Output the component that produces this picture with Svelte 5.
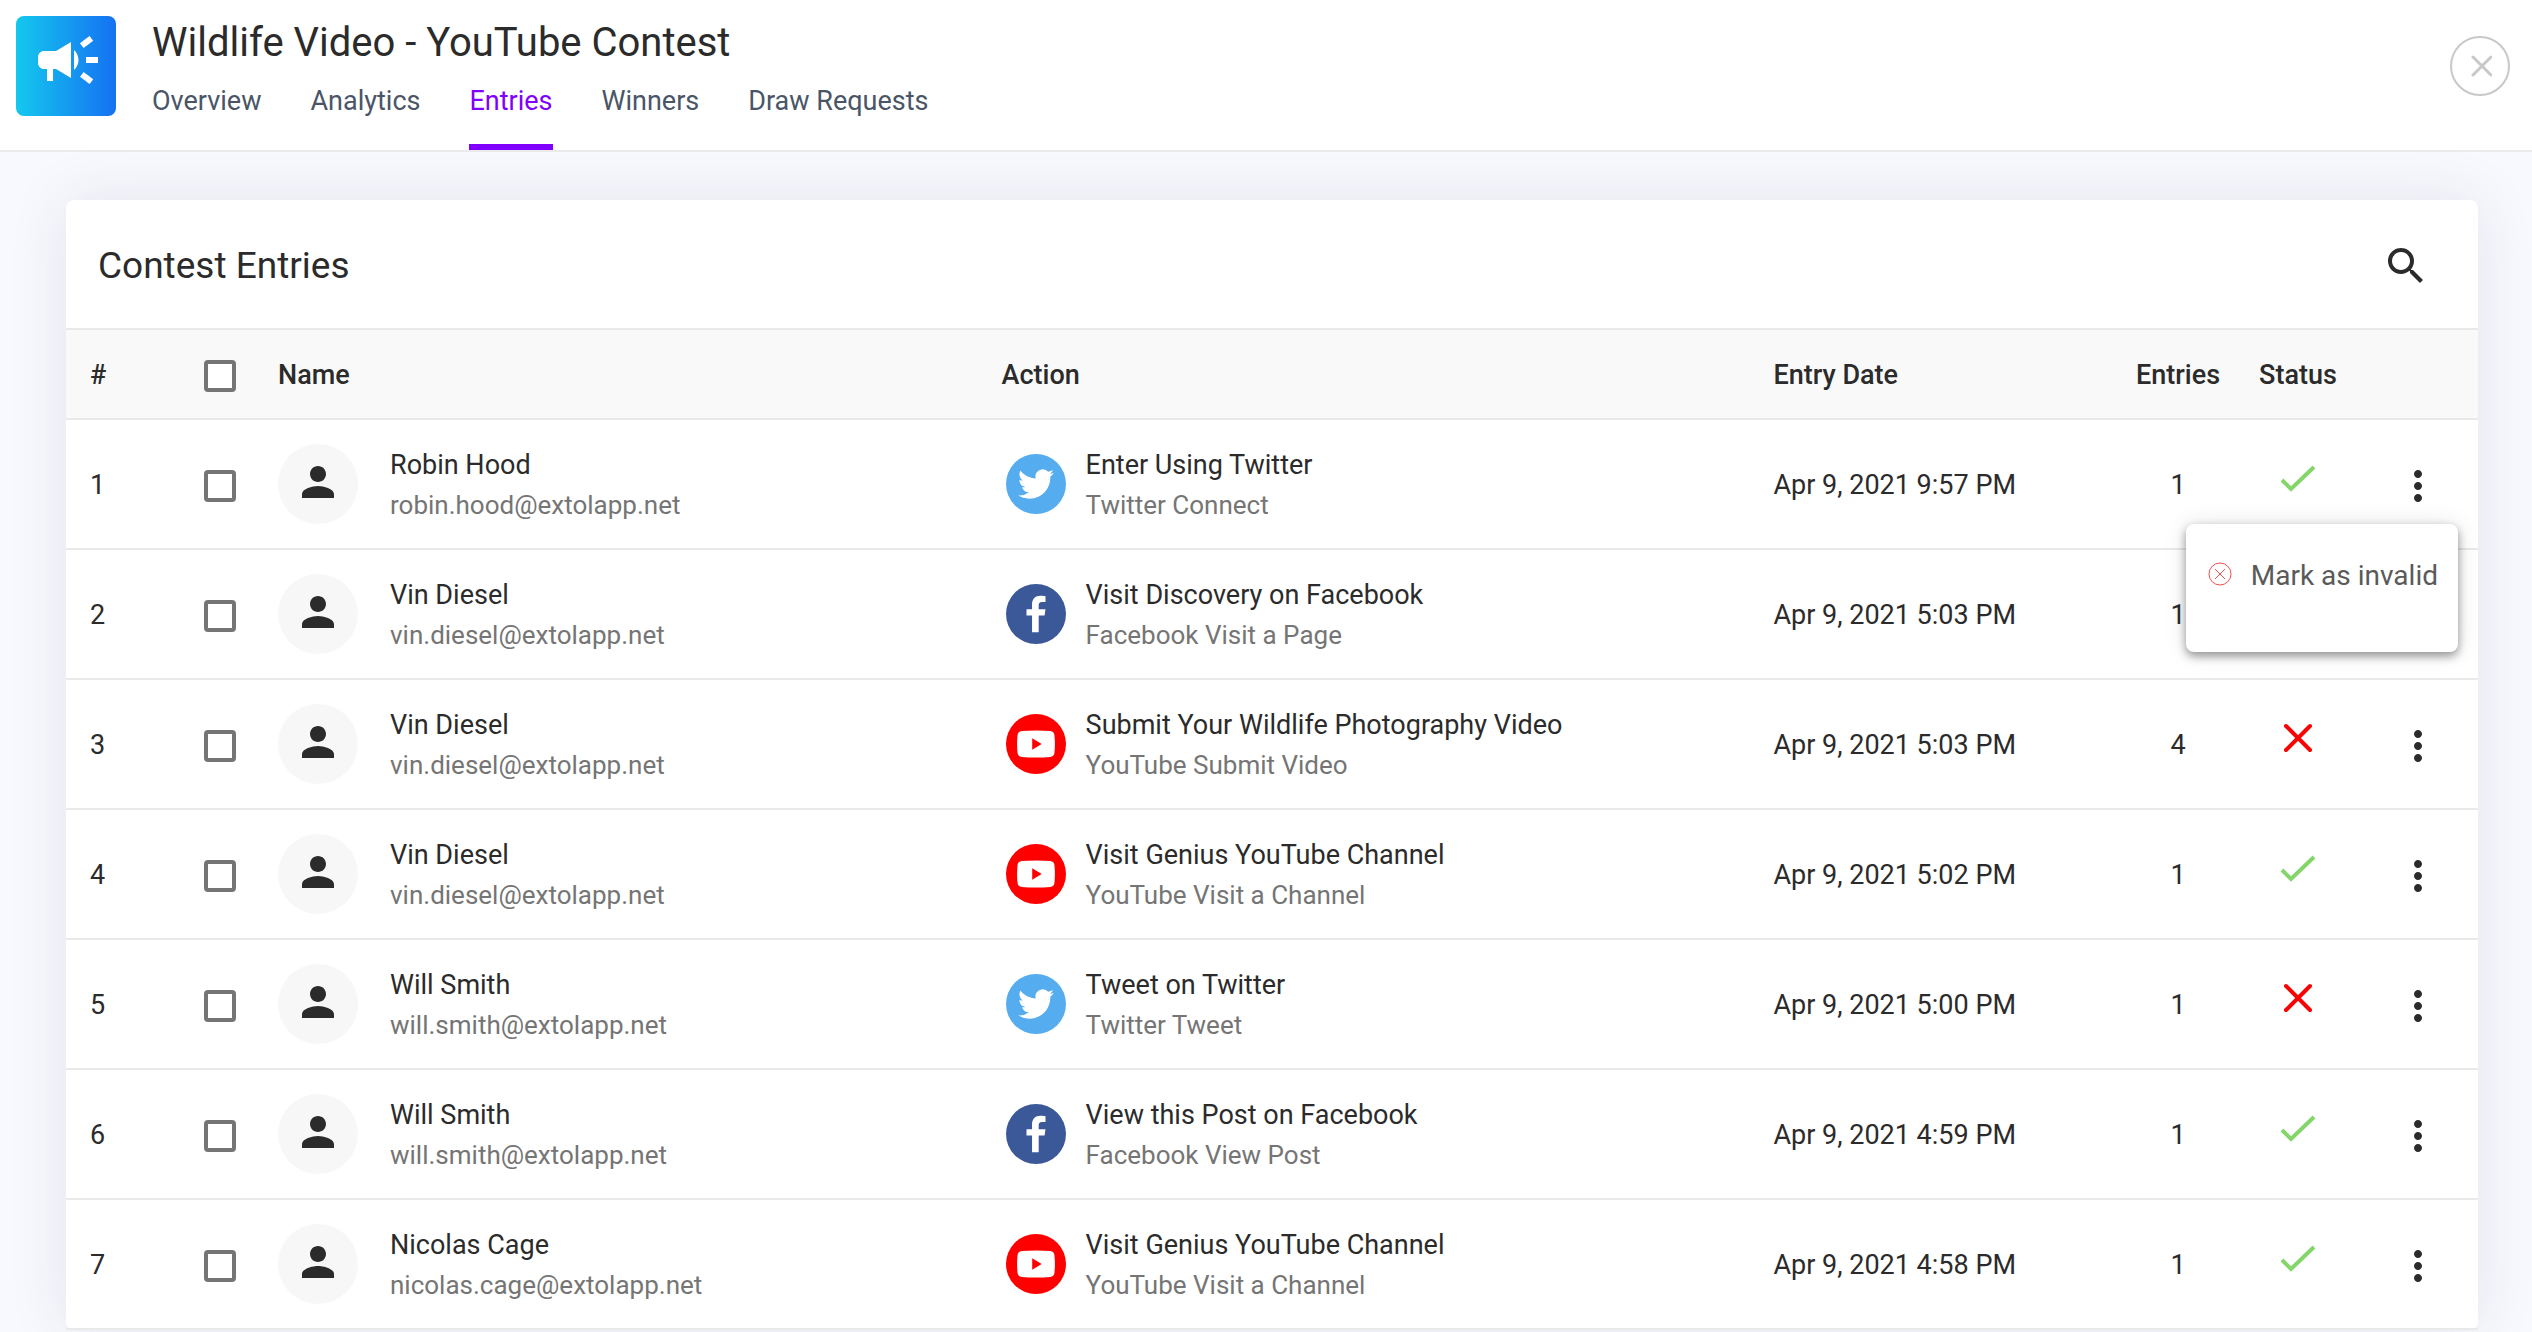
<script lang="ts">
  type Brand = 'twitter' | 'facebook' | 'youtube';

  interface Entry {
    id: number;
    name: string;
    email: string;
    brand: Brand;
    action: string;
    type: string;
    date: string;
    count: number;
    valid: boolean;
  }

  const tabs = ['Overview', 'Analytics', 'Entries', 'Winners', 'Draw Requests'];

  const entries: Entry[] = [
    { id: 1, name: 'Robin Hood', email: 'robin.hood@extolapp.net', brand: 'twitter', action: 'Enter Using Twitter', type: 'Twitter Connect', date: 'Apr 9, 2021 9:57 PM', count: 1, valid: true },
    { id: 2, name: 'Vin Diesel', email: 'vin.diesel@extolapp.net', brand: 'facebook', action: 'Visit Discovery on Facebook', type: 'Facebook Visit a Page', date: 'Apr 9, 2021 5:03 PM', count: 1, valid: true },
    { id: 3, name: 'Vin Diesel', email: 'vin.diesel@extolapp.net', brand: 'youtube', action: 'Submit Your Wildlife Photography Video', type: 'YouTube Submit Video', date: 'Apr 9, 2021 5:03 PM', count: 4, valid: false },
    { id: 4, name: 'Vin Diesel', email: 'vin.diesel@extolapp.net', brand: 'youtube', action: 'Visit Genius YouTube Channel', type: 'YouTube Visit a Channel', date: 'Apr 9, 2021 5:02 PM', count: 1, valid: true },
    { id: 5, name: 'Will Smith', email: 'will.smith@extolapp.net', brand: 'twitter', action: 'Tweet on Twitter', type: 'Twitter Tweet', date: 'Apr 9, 2021 5:00 PM', count: 1, valid: false },
    { id: 6, name: 'Will Smith', email: 'will.smith@extolapp.net', brand: 'facebook', action: 'View this Post on Facebook', type: 'Facebook View Post', date: 'Apr 9, 2021 4:59 PM', count: 1, valid: true },
    { id: 7, name: 'Nicolas Cage', email: 'nicolas.cage@extolapp.net', brand: 'youtube', action: 'Visit Genius YouTube Channel', type: 'YouTube Visit a Channel', date: 'Apr 9, 2021 4:58 PM', count: 1, valid: true },
  ];

  let activeTab = $state('Entries');
  let openMenu = $state<number | null>(1);
  let selected = $state<number[]>([]);

  function toggleAll(e: Event) {
    const box = e.currentTarget as HTMLInputElement;
    selected = box.checked ? entries.map((entry) => entry.id) : [];
  }

  function toggleMenu(id: number) {
    openMenu = openMenu === id ? null : id;
  }
</script>

<header class="topbar">
  <div class="logo">
    <svg viewBox="0 0 24 24" width="72" height="72" aria-hidden="true">
      <path d="M18 11v2h4v-2h-4zm-2 6.61c.96.71 2.21 1.65 3.2 2.39.4-.53.8-1.07 1.2-1.6-.99-.74-2.24-1.68-3.2-2.4-.4.54-.8 1.08-1.2 1.61zM20.4 5.6c-.4-.53-.8-1.07-1.2-1.6-.99.74-2.24 1.68-3.2 2.4.4.53.8 1.07 1.2 1.6.96-.72 2.21-1.65 3.2-2.4zM4 9c-1.1 0-2 .9-2 2v2c0 1.1.9 2 2 2h1v4h2v-4h1l5 3V6L8 9H4zm11.5 3c0-1.33-.58-2.53-1.5-3.35v6.69c.92-.81 1.5-2.01 1.5-3.34z" />
    </svg>
  </div>
  <div class="heading">
    <h1>Wildlife Video - YouTube Contest</h1>
    <nav>
      {#each tabs as tab}
        <a href="#{tab}" class:active={tab === activeTab} onclick={() => (activeTab = tab)}>{tab}</a>
      {/each}
    </nav>
  </div>
  <button type="button" class="close" aria-label="Close">
    <svg viewBox="0 0 24 24" width="24" height="24" aria-hidden="true">
      <path d="M5 3l18 18M23 3L5 21" />
    </svg>
  </button>
</header>

<main>
  <section class="card">
    <div class="card-head">
      <h2>Contest Entries</h2>
      <button type="button" aria-label="Search">
        <svg viewBox="0 0 24 24" width="48" height="48" aria-hidden="true">
          <path d="M15.5 14h-.79l-.28-.27C15.41 12.59 16 11.11 16 9.5 16 5.91 13.09 3 9.5 3S3 5.91 3 9.5 5.91 16 9.5 16c1.61 0 3.09-.59 4.23-1.57l.27.28v.79l5 4.99L20.49 19l-4.99-5zm-6 0C7.01 14 5 11.99 5 9.5S7.01 5 9.5 5 14 7.01 14 9.5 11.99 14 9.5 14z" />
        </svg>
      </button>
    </div>

    <table>
      <thead>
        <tr>
          <th class="num">#</th>
          <th class="check"><input type="checkbox" aria-label="Select all" onchange={toggleAll} /></th>
          <th class="name">Name</th>
          <th class="action">Action</th>
          <th class="date">Entry Date</th>
          <th class="count">Entries</th>
          <th class="status">Status</th>
          <th class="more"></th>
        </tr>
      </thead>
      <tbody>
        {#each entries as entry (entry.id)}
          <tr>
            <td class="num">{entry.id}</td>
            <td class="check">
              <input type="checkbox" aria-label="Select entry {entry.id}" value={entry.id} bind:group={selected} />
            </td>
            <td class="name">
              <div class="person">
                <span class="avatar">
                  <svg viewBox="0 0 24 24" width="48" height="48" aria-hidden="true">
                    <path d="M12 12c2.21 0 4-1.79 4-4s-1.79-4-4-4-4 1.79-4 4 1.79 4 4 4zm0 2c-2.67 0-8 1.34-8 4v2h16v-2c0-2.66-5.33-4-8-4z" />
                  </svg>
                </span>
                <div class="lines">
                  <div>{entry.name}</div>
                  <div class="sub">{entry.email}</div>
                </div>
              </div>
            </td>
            <td class="action">
              <div class="task">
                <span class="brand {entry.brand}">
                  {#if entry.brand === 'twitter'}
                    <svg viewBox="0 0 24 24" width="36" height="36" aria-hidden="true">
                      <path d="M23.95 4.57a10 10 0 0 1-2.82.77 4.96 4.96 0 0 0 2.16-2.72c-.95.55-2 .95-3.13 1.18a4.92 4.92 0 0 0-8.38 4.48C7.69 8.1 4.07 6.13 1.64 3.16a4.92 4.92 0 0 0 1.52 6.57 4.9 4.9 0 0 1-2.23-.61v.06a4.92 4.92 0 0 0 3.95 4.83 5 5 0 0 1-2.21.08 4.94 4.94 0 0 0 4.6 3.42A9.87 9.87 0 0 1 0 19.54a14 14 0 0 0 7.55 2.21c9.05 0 14-7.5 14-13.98 0-.21 0-.42-.02-.63a9.94 9.94 0 0 0 2.42-2.57z" />
                    </svg>
                  {:else if entry.brand === 'facebook'}
                    <svg viewBox="0 0 24 24" width="38" height="38" aria-hidden="true">
                      <path d="M9.5 23.5V13H6V9h3.5V6c0-3.5 2.1-5.5 5.3-5.5 1.5 0 2.7.2 3.2.3v3.6h-2.2c-1.7 0-2.1.9-2.1 2.1V9H18l-.6 4h-3.7v10.5z" />
                    </svg>
                  {:else}
                    <svg viewBox="0 0 40 29" width="38" height="28" aria-hidden="true">
                      <path fill-rule="evenodd" d="M5 .8Q20-.4 35 .8 39 1.2 39.4 5 40.4 14.5 39.4 24 39 27.8 35 28.2 20 29.4 5 28.2 1 27.8.6 24-.4 14.5.6 5 1 1.2 5 .8zM16 8.5v12l10-6z" />
                    </svg>
                  {/if}
                </span>
                <div class="lines">
                  <div>{entry.action}</div>
                  <div class="sub">{entry.type}</div>
                </div>
              </div>
            </td>
            <td class="date">{entry.date}</td>
            <td class="count">{entry.count}</td>
            <td class="status">
              {#if entry.valid}
                <svg class="valid" viewBox="0 0 36 36" width="36" height="36" role="img" aria-label="Valid">
                  <path d="M2 18l9 9L34 5" />
                </svg>
              {:else}
                <svg class="invalid" viewBox="0 0 36 36" width="36" height="36" role="img" aria-label="Invalid">
                  <path d="M6 4l24 24M30 4L6 28" />
                </svg>
              {/if}
            </td>
            <td class="more">
              <div class="menu-anchor">
                <button type="button" aria-label="Entry options" onclick={() => toggleMenu(entry.id)}>
                  <svg viewBox="0 0 24 24" width="48" height="48" aria-hidden="true">
                    <path d="M12 8c1.1 0 2-.9 2-2s-.9-2-2-2-2 .9-2 2 .9 2 2 2zm0 2c-1.1 0-2 .9-2 2s.9 2 2 2 2-.9 2-2-.9-2-2-2zm0 6c-1.1 0-2 .9-2 2s.9 2 2 2 2-.9 2-2-.9-2-2-2z" />
                  </svg>
                </button>
                {#if openMenu === entry.id}
                  <div class="menu">
                    <button type="button" onclick={() => (openMenu = null)}>
                      <svg viewBox="0 0 24 24" width="24" height="24" aria-hidden="true">
                        <circle cx="12" cy="12" r="11" />
                        <path d="M7 7l10 10M17 7L7 17" />
                      </svg>
                      Mark as invalid
                    </button>
                  </div>
                {/if}
              </div>
            </td>
          </tr>
        {/each}
      </tbody>
    </table>
  </section>
</main>

<style>
  :global(body) {
    background: #f8f9fe;
    color: #2b2b2b;
    font-family: Roboto, sans-serif;
    font-size: 27px;
    line-height: 40px;
    height: 100vh;
    overflow: hidden;
  }

  h1,
  h2 {
    margin: 0;
    font-weight: 400;
  }

  button {
    padding: 0;
    border: 0;
    background: none;
    color: inherit;
    font: inherit;
    cursor: pointer;
  }

  svg {
    display: block;
    fill: currentColor;
  }

  .topbar {
    display: flex;
    align-items: flex-start;
    padding: 16px 22px 0 16px;
    background: white;
    border-bottom: 2px solid #ebebed;
  }

  .logo {
    width: 100px;
    height: 100px;
    padding: 8px 0 0 16px;
    box-sizing: border-box;
    border-radius: 8px;
    color: white;
    background: linear-gradient(90deg, #14c8ee, #1571f2);
  }

  .heading {
    flex: 1;
    margin-left: 36px;
  }

  h1 {
    font-size: 40px;
    line-height: 54px;
  }

  nav {
    display: flex;
    gap: 49px;
  }

  nav a {
    padding: 11px 0 23px;
    border-bottom: 6px solid transparent;
    color: #4a5568;
    text-decoration: none;
  }

  nav a.active {
    color: #7f00ff;
    border-color: #7f00ff;
  }

  .close {
    display: flex;
    align-items: center;
    justify-content: center;
    width: 60px;
    height: 60px;
    margin-top: 20px;
    border: 2px solid #c8c8c8;
    border-radius: 50%;
  }

  .close svg {
    stroke: #c8c8c8;
    stroke-width: 3;
    stroke-linecap: round;
  }

  main {
    padding: 48px 54px 48px 66px;
  }

  .card {
    background: white;
    border-radius: 8px;
    box-shadow: 0 0 60px rgba(50, 50, 80, 0.1);
  }

  .card-head {
    display: flex;
    align-items: center;
    justify-content: space-between;
    height: 128px;
    padding: 4px 48px 0 32px;
    box-sizing: border-box;
  }

  h2 {
    font-size: 37px;
    line-height: 48px;
  }

  table {
    width: 100%;
    table-layout: fixed;
    border-collapse: collapse;
  }

  th,
  td {
    box-sizing: border-box;
    padding: 2px 0 0;
    text-align: left;
    border-bottom: 2px solid #e9e9e9;
  }

  th {
    height: 90px;
    background: #f9f9f9;
    border-top: 2px solid #e9e9e9;
    font-weight: 500;
  }

  td {
    height: 130px;
  }

  td.name,
  td.action {
    padding-top: 0;
  }

  .num {
    width: 138px;
    padding-left: 24px;
  }

  .check {
    width: 74px;
    padding-top: 4px;
  }

  .name {
    width: 30%;
  }

  .action {
    width: 32%;
  }

  .count,
  .status,
  .more {
    width: 120px;
    text-align: center;
  }

  .more {
    padding-top: 4px;
  }

  td.status {
    padding: 0 0 8px;
  }

  input[type='checkbox'] {
    display: block;
    appearance: none;
    width: 32px;
    height: 32px;
    margin: 0;
    border: 4px solid #757575;
    border-radius: 4px;
    background: white;
  }

  input[type='checkbox']:checked {
    background: #7f00ff;
    border-color: #7f00ff;
  }

  .person,
  .task {
    display: flex;
    align-items: center;
  }

  .person {
    gap: 32px;
  }

  .task {
    gap: 20px;
    padding-left: 4px;
  }

  .lines {
    padding-top: 2px;
  }

  .sub {
    color: #757575;
    font-size: 26px;
  }

  .avatar {
    display: flex;
    justify-content: center;
    width: 80px;
    height: 80px;
    padding-top: 14px;
    box-sizing: border-box;
    border-radius: 50%;
    background: #f7f7f7;
  }

  .brand {
    display: flex;
    align-items: center;
    justify-content: center;
    width: 60px;
    height: 60px;
    border-radius: 50%;
    color: white;
  }

  .twitter {
    background: #55acee;
  }

  .facebook {
    background: #3b5998;
  }

  .youtube {
    background: #ff0000;
  }

  .status svg {
    margin: 0 auto;
    fill: none;
    stroke-width: 4;
  }

  .valid {
    stroke: #84d66b;
  }

  .invalid {
    stroke: #f80404;
    stroke-linecap: round;
  }

  .menu-anchor {
    position: relative;
    display: flex;
    justify-content: center;
  }

  .menu {
    position: absolute;
    top: 62px;
    right: 20px;
    z-index: 1;
    padding: 32px 20px 56px 22px;
    background: white;
    border-radius: 8px;
    box-shadow: 0 4px 10px rgba(0, 0, 0, 0.4), 0 0 24px rgba(0, 0, 0, 0.1);
  }

  .menu button {
    display: flex;
    align-items: center;
    gap: 19px;
    color: #5a5a5a;
    font-size: 28px;
    white-space: nowrap;
  }

  .menu svg {
    margin-bottom: 4px;
    fill: none;
    stroke: #ef5350;
    stroke-width: 1;
  }
</style>
